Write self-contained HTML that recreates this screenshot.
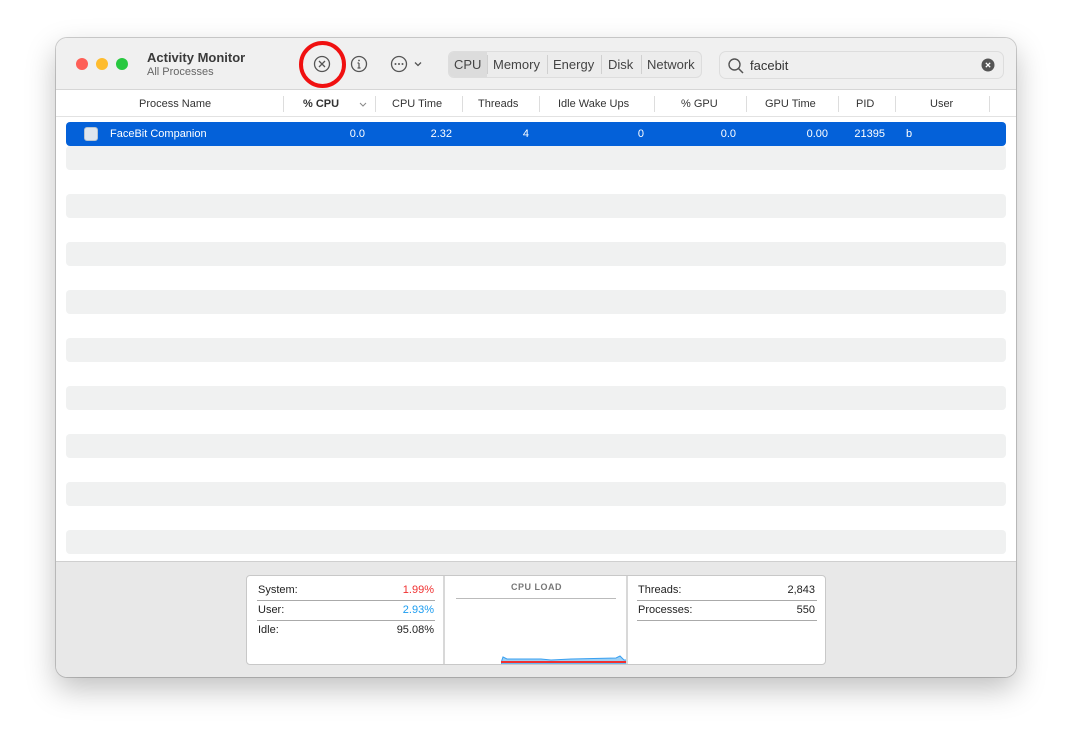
<!DOCTYPE html>
<html><head><style>
*{margin:0;padding:0;box-sizing:border-box}
body{width:1072px;height:752px;background:#fff;font-family:"Liberation Sans",sans-serif;position:relative;overflow:hidden}
.win{position:absolute;left:56px;top:38px;width:960px;height:639px;border-radius:11px;background:#fff;box-shadow:0 12px 30px rgba(0,0,0,.25),0 0 0 1px rgba(0,0,0,.18);overflow:hidden}
.tb{position:absolute;left:0;top:0;width:960px;height:52px;background:#f0f0f0;border-bottom:1px solid #d6d6d6}
.a{position:absolute;white-space:nowrap}
.dot{position:absolute;top:20px;width:12px;height:12px;border-radius:50%}
.hdr{position:absolute;top:53px;left:0;width:960px;height:26px;border-bottom:1px solid #e2e2e2;font-size:11px;color:#333}
.hdr span{position:absolute;top:7px}
.sep{position:absolute;top:5px;width:1px;height:16px;background:#ddd}
.stripe{position:absolute;left:10px;width:940px;height:24px;background:#f0f1f1;border-radius:4px}
.row{position:absolute;left:10px;top:84px;width:940px;height:24px;background:#0461d9;border-radius:4px;color:#fff;font-size:11px}
.row span{position:absolute;top:6px}
.bot{position:absolute;left:0;top:523px;width:960px;height:116px;background:#e8e8e8;border-top:1px solid #cfcfcf}
.box{position:absolute;left:190px;top:13px;width:580px;height:90px;background:#fff;border:1px solid #c8c8c8;border-radius:4px;font-size:11px;color:#222}
.ln{position:absolute;height:1px;background:#aaa}
</style></head><body>
<div class="win">
<div class="tb">
<div class="dot" style="left:20px;background:#fe5f57"></div>
<div class="dot" style="left:40px;background:#febc2e"></div>
<div class="dot" style="left:60px;background:#28c840"></div>
<div class="a" style="left:91px;top:12px;font-size:13px;font-weight:bold;color:#3a3a3a">Activity Monitor</div>
<div class="a" style="left:91px;top:28px;font-size:11px;color:#666">All Processes</div>
<div class="a" style="left:243px;top:3px;width:47px;height:47px;border:4px solid #f01010;border-radius:50%"></div>
<svg class="a" style="left:257px;top:17px" width="18" height="18" viewBox="0 0 18 18"><circle cx="9" cy="9" r="7.5" fill="none" stroke="#555" stroke-width="1.3"/><path d="M6 6L12 12M12 6L6 12" stroke="#555" stroke-width="1.3"/></svg>
<svg class="a" style="left:294px;top:17px" width="18" height="18" viewBox="0 0 18 18"><circle cx="9" cy="9" r="7.5" fill="none" stroke="#555" stroke-width="1.3"/><path d="M9 8V13M7.5 8H9M7.5 13H10.5" stroke="#555" stroke-width="1.2" fill="none"/><circle cx="9" cy="5.5" r=".9" fill="#555"/></svg>
<svg class="a" style="left:334px;top:17px" width="36" height="18" viewBox="0 0 36 18"><circle cx="9" cy="9" r="7.5" fill="none" stroke="#555" stroke-width="1.3"/><circle cx="5.5" cy="9" r="1" fill="#555"/><circle cx="9" cy="9" r="1" fill="#555"/><circle cx="12.5" cy="9" r="1" fill="#555"/><path d="M25 7.5L28 10.5L31 7.5" stroke="#555" stroke-width="1.3" fill="none"/></svg>
<div class="a" style="left:392px;top:13px;width:254px;height:27px;border:1px solid #ddd;border-radius:6px;background:#ececec;font-size:13px;color:#444">
<div class="a" style="left:0;top:0;width:38px;height:25px;background:#dcdcdc;border-radius:5px 0 0 5px"></div>
<span class="a" style="left:5px;top:5px">CPU</span>
<span class="a" style="left:44px;top:5px">Memory</span>
<span class="a" style="left:104px;top:5px">Energy</span>
<span class="a" style="left:159px;top:5px">Disk</span>
<span class="a" style="left:198px;top:5px">Network</span>
<div class="a" style="left:38px;top:3px;width:1px;height:19px;background:#d0d0d0"></div>
<div class="a" style="left:98px;top:3px;width:1px;height:19px;background:#d0d0d0"></div>
<div class="a" style="left:152px;top:3px;width:1px;height:19px;background:#d0d0d0"></div>
<div class="a" style="left:192px;top:3px;width:1px;height:19px;background:#d0d0d0"></div>
</div>
<div class="a" style="left:663px;top:13px;width:285px;height:28px;border:1px solid #ddd;border-radius:7px;background:#efefef">
<svg class="a" style="left:7px;top:5px" width="18" height="18" viewBox="0 0 18 18"><circle cx="7.5" cy="7.5" r="5.5" fill="none" stroke="#555" stroke-width="1.4"/><path d="M11.5 11.5L16 16" stroke="#555" stroke-width="1.5"/></svg>
<span class="a" style="left:30px;top:6px;font-size:13px;color:#333">facebit</span>
<svg class="a" style="left:261px;top:6px" width="14" height="14" viewBox="0 0 14 14"><circle cx="7" cy="7" r="6.5" fill="#555"/><path d="M4.8 4.8L9.2 9.2M9.2 4.8L4.8 9.2" stroke="#fff" stroke-width="1.3"/></svg>
</div>
</div>
<div class="hdr">
<span style="left:83px">Process Name</span>
<div class="sep" style="left:227px"></div>
<span style="left:247px;font-weight:bold">% CPU</span>
<svg class="a" style="left:303px;top:11px" width="8" height="6"><path d="M1 1L4 4L7 1" stroke="#888" fill="none"/></svg>
<div class="sep" style="left:319px"></div>
<span style="left:336px">CPU Time</span>
<div class="sep" style="left:406px"></div>
<span style="left:422px">Threads</span>
<div class="sep" style="left:483px"></div>
<span style="left:502px">Idle Wake Ups</span>
<div class="sep" style="left:598px"></div>
<span style="left:625px">% GPU</span>
<div class="sep" style="left:690px"></div>
<span style="left:709px">GPU Time</span>
<div class="sep" style="left:782px"></div>
<span style="left:800px">PID</span>
<div class="sep" style="left:839px"></div>
<span style="left:874px">User</span>
<div class="sep" style="left:933px"></div>
</div>
<div class="row">
<div class="a" style="left:18px;top:5px;width:14px;height:14px;border-radius:3px;background:#dfe6ee;border:1px solid #b8c4d0"></div>
<span style="left:44px">FaceBit Companion</span>
<span style="right:641px">0.0</span>
<span style="right:554px">2.32</span>
<span style="right:477px">4</span>
<span style="right:362px">0</span>
<span style="right:270px">0.0</span>
<span style="right:178px">0.00</span>
<span style="right:121px">21395</span>
<span style="left:840px">b</span>
</div>
<div class="stripe" style="top:108px"></div>
<div class="stripe" style="top:156px"></div>
<div class="stripe" style="top:204px"></div>
<div class="stripe" style="top:252px"></div>
<div class="stripe" style="top:300px"></div>
<div class="stripe" style="top:348px"></div>
<div class="stripe" style="top:396px"></div>
<div class="stripe" style="top:444px"></div>
<div class="stripe" style="top:492px"></div>
<div class="bot">
<div class="box">
<span class="a" style="left:11px;top:8px">System:</span><span class="a" style="right:391px;top:8px;color:#f03030">1.99%</span>
<div class="ln" style="left:10px;top:24px;width:178px"></div>
<span class="a" style="left:11px;top:28px">User:</span><span class="a" style="right:391px;top:28px;color:#1a9cf0">2.93%</span>
<div class="ln" style="left:10px;top:44px;width:178px"></div>
<span class="a" style="left:11px;top:48px">Idle:</span><span class="a" style="right:391px;top:48px">95.08%</span>
<div class="a" style="left:196px;top:0;width:2px;height:88px;background:#d8d8d8"></div>
<span class="a" style="left:264px;top:6px;font-size:9px;font-weight:bold;color:#777;letter-spacing:.5px">CPU LOAD</span>
<div class="ln" style="left:209px;top:22px;width:160px;background:#bbb"></div>
<svg class="a" style="left:254px;top:78px" width="126" height="10"><path d="M0 9L2 3L6 5L40 5L50 6L70 5L115 4L119 2L123 6L126 6L126 10L0 10Z" fill="#9cd0f5" stroke="#3aa0f0"/><path d="M0 8L126 8" stroke="#f03030" stroke-width="2"/></svg>
<div class="a" style="left:379px;top:0;width:2px;height:88px;background:#d8d8d8"></div>
<span class="a" style="left:391px;top:8px">Threads:</span><span class="a" style="right:10px;top:8px">2,843</span>
<div class="ln" style="left:390px;top:24px;width:180px"></div>
<span class="a" style="left:391px;top:28px">Processes:</span><span class="a" style="right:10px;top:28px">550</span>
<div class="ln" style="left:390px;top:44px;width:180px"></div>
</div>
</div>
</div>
</body></html>
